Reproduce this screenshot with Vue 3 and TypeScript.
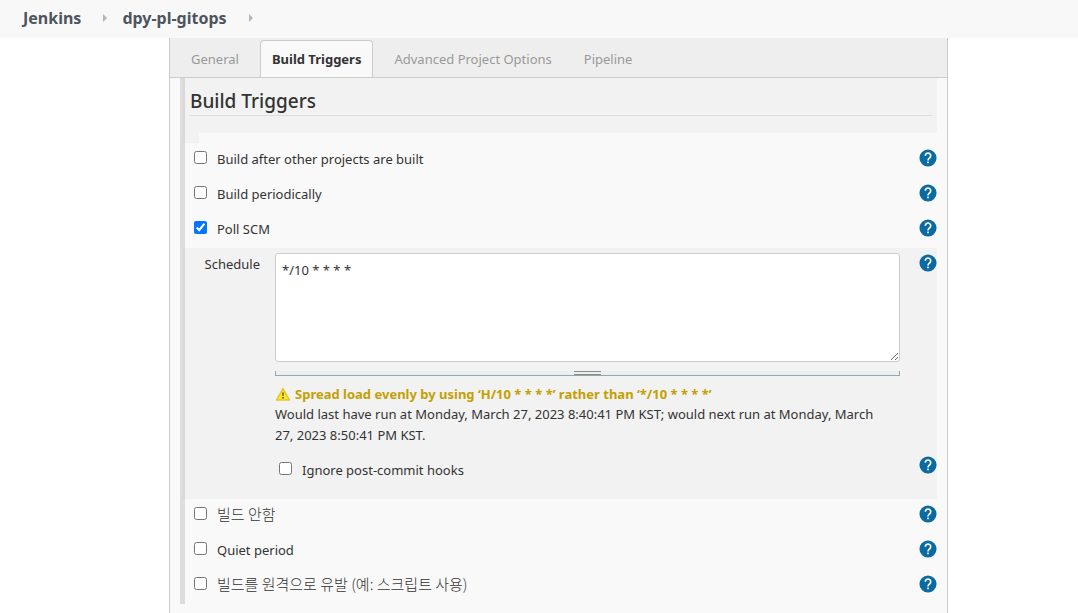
<script setup lang="ts">
import { defineComponent, h, ref } from 'vue'

interface Trigger {
  id: string
  label: string
  checked: boolean
  korean?: boolean
}

const HelpButton = defineComponent({
  props: { topic: { type: String, required: true } },
  setup(props) {
    return () =>
      h('button', { type: 'button', class: 'help', 'aria-label': `Help for ${props.topic}` }, [
        h('svg', { viewBox: '0 0 24 24', width: 18, height: 18, 'aria-hidden': 'true' }, [
          h('circle', { cx: 12, cy: 12, r: 11.4, fill: '#0b6aa2' }),
          h('path', {
            d: 'M8.4 9a3.600 3.600 0 1 1 6.100 2.500C13.200 12.700 12 13.200 12 15.200',
            fill: 'none',
            stroke: '#fff',
            'stroke-width': 2.2,
          }),
          h('rect', { x: 10.9, y: 16.8, width: 2.2, height: 2.2, fill: '#fff' }),
        ]),
      ])
  },
})

const tabs = ['General', 'Build Triggers', 'Advanced Project Options', 'Pipeline']
const activeTab = ref('Build Triggers')
const crumbs = ['Jenkins', 'dpy-pl-gitops']

const before = ref<Trigger[]>([
  { id: 'upstream', label: 'Build after other projects are built', checked: false },
  { id: 'timer', label: 'Build periodically', checked: false },
  { id: 'scm', label: 'Poll SCM', checked: true },
])
const after = ref<Trigger[]>([
  { id: 'disable', label: '빌드 안함', checked: false, korean: true },
  { id: 'quiet', label: 'Quiet period', checked: false },
  { id: 'remote', label: '빌드를 원격으로 유발 (예: 스크립트 사용)', checked: false, korean: true },
])
const schedule = ref('*/10 * * * *')
const ignoreHooks = ref(false)
</script>

<template>
  <div class="page">
    <nav class="breadcrumbs" aria-label="Breadcrumb">
      <template v-for="crumb in crumbs" :key="crumb">
        <a href="#">{{ crumb }}</a>
        <svg class="arrow" viewBox="0 0 4 8" width="4" height="8" aria-hidden="true">
          <path d="M0 0 4 4 0 8Z" fill="#b5b5b5" />
        </svg>
      </template>
    </nav>

    <main class="panel">
      <div class="tabs" role="tablist">
        <button
          v-for="tab in tabs"
          :key="tab"
          type="button"
          role="tab"
          class="tab"
          :class="{ active: tab === activeTab }"
          :aria-selected="tab === activeTab"
          @click="activeTab = tab"
        >{{ tab }}</button>
      </div>

      <section class="section">
        <header class="heading">
          <h2>Build Triggers</h2>
        </header>
        <div class="notch"></div>

        <div v-for="item in before" :key="item.id" class="row">
          <input :id="item.id" v-model="item.checked" type="checkbox" />
          <label :for="item.id">{{ item.label }}</label>
          <HelpButton :topic="item.label" />
        </div>

        <div class="details">
          <div class="schedule">
            <label class="schedule-label" for="schedule">Schedule</label>
            <div class="field">
              <textarea id="schedule" v-model="schedule" spellcheck="false"></textarea>
              <div class="handle"><span></span></div>
              <p class="warning">
                <svg viewBox="0 0 16 16" width="16" height="16" aria-hidden="true">
                  <path d="M8 2.500 14.500 14h-13Z" fill="#fbe52f" stroke="#e6c628" stroke-width="1.500" stroke-linejoin="round" />
                  <path d="M7.200 6.500h1.600l-.3 3.500h-1ZM7.200 11h1.600v1.500H7.200Z" fill="#5b500e" />
                </svg>
                <span>Spread load evenly by using ‘H/10 * * * *’ rather than ‘*/10 * * * *’</span>
              </p>
              <p class="info">Would last have run at Monday, March 27, 2023 8:40:41 PM KST; would next run at Monday, March 27, 2023 8:50:41 PM KST.</p>
            </div>
            <HelpButton topic="Schedule" />
          </div>
          <div class="row nested">
            <input id="ignore" v-model="ignoreHooks" type="checkbox" />
            <label for="ignore">Ignore post-commit hooks</label>
            <HelpButton topic="Ignore post-commit hooks" />
          </div>
        </div>

        <div v-for="item in after" :key="item.id" class="row">
          <input :id="item.id" v-model="item.checked" type="checkbox" />
          <label :for="item.id" :class="{ korean: item.korean }">{{ item.label }}</label>
          <HelpButton :topic="item.label" />
        </div>
      </section>
    </main>
  </div>
</template>

<style>
body {
  margin: 0;
  background: #fff;
}
</style>

<style scoped>
.page {
  display: flex;
  flex-direction: column;
  min-height: 100vh;
  color: #333;
  font-family: "Noto Sans", "Noto Sans CJK KR", sans-serif;
  font-size: 13px;
  line-height: 21px;
}
.page * {
  box-sizing: border-box;
}
.breadcrumbs {
  display: flex;
  align-items: center;
  height: 38px;
  padding: 0 0 2px 23px;
  background: #f8f8f8;
}
.breadcrumbs a {
  color: #4d545d;
  font-size: 16px;
  font-weight: 700;
  text-decoration: none;
}
.arrow {
  margin: 0 15px 0 22px;
}
.panel {
  flex: 1;
  margin: 0 130px 0 169px;
  border: solid #ccc;
  border-width: 0 1px;
  background: #f9f9f9;
}
.tabs {
  display: flex;
  align-items: flex-end;
  height: 40px;
  padding-left: 5px;
  border-bottom: 1px solid #ccc;
  background: #eee;
}
.tab {
  height: 37px;
  padding: 2px 16px 0;
  border: 0;
  background: none;
  color: #999;
  font: inherit;
}
.tab.active {
  margin: 0 5px;
  padding: 0 11px;
  border: 1px solid #ccc;
  border-bottom: 0;
  border-radius: 4px 4px 0 0;
  background: #f9f9f9;
  color: #333;
  font-weight: 700;
}
.section {
  margin: 0 10px;
  border-left: 5px solid #ddd;
}
.heading {
  height: 55px;
  padding: 8px 5px 0;
  background: #f2f2f2;
  box-shadow: -2px 0 0 #d8d8d8;
}
h2 {
  margin: 0;
  height: 30px;
  border-bottom: 1px solid #ddd;
  font-size: 19px;
  font-weight: 500;
  line-height: 30px;
}
.notch {
  width: 14px;
  height: 10px;
  background: #f2f2f2;
  box-shadow: -2px 0 0 #d8d8d8;
}
.row {
  display: flex;
  align-items: flex-start;
  height: 35px;
  padding-top: 6px;
}
.row input {
  width: 13px;
  height: 13px;
  margin: 2px 10px 0 9px;
}
.row label {
  flex: 1;
}
.row .korean {
  font-family: "Noto Sans CJK KR", sans-serif;
  font-size: 15px;
  font-weight: 300;
  line-height: 18px;
}
.row :deep(.help),
.schedule :deep(.help) {
  display: block;
  flex: none;
  width: 18px;
  height: 18px;
  margin: 0;
  padding: 0;
  border: 0;
  background: none;
}
:deep(.help svg) {
  display: block;
}
.details {
  padding-bottom: 14px;
  background: #f2f2f2;
  box-shadow: -2px 0 0 #d8d8d8;
}
.schedule {
  display: flex;
  align-items: flex-start;
}
.schedule-label {
  width: 90px;
  padding: 6px 15px 0 0;
  text-align: right;
}
.schedule :deep(.help) {
  margin: 6px 0 0 19px;
}
.field {
  flex: 1;
  min-width: 0;
  padding-top: 5px;
}
textarea {
  display: block;
  width: 100%;
  height: 109px;
  padding: 6px;
  border: 1px solid #ccc;
  border-radius: 3px;
  background: #fff;
  color: #333;
  font: inherit;
  resize: vertical;
}
.handle {
  display: flex;
  justify-content: center;
  height: 5px;
  margin-top: 9px;
  border: solid #9aa5ab;
  border-width: 0 1px 1px;
  background: #eaeff2;
}
.handle span {
  width: 27px;
  height: 4px;
  border: solid #888e84;
  border-width: 1px 0;
}
.warning,
.info {
  margin: 0;
}
.info {
  padding-right: 8px;
}
.warning {
  display: flex;
  align-items: center;
  gap: 4px;
  margin-top: 8px;
  height: 20px;
  color: #c4a000;
  font-weight: 700;
}
.nested {
  margin-top: 4px;
  padding-left: 85px;
}
.nested input {
  margin-top: 6px;
}
.nested label {
  padding-top: 4px;
}
</style>
